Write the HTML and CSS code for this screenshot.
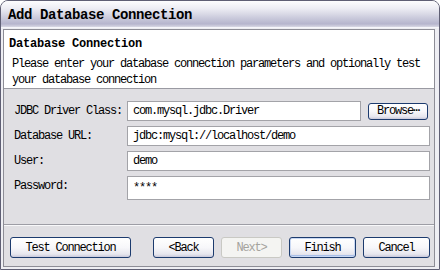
FILE: index.html
```html
<!DOCTYPE html>
<html lang="en">
<head>
  <meta charset="UTF-8" />
  <title>Add Database Connection</title>
  <link rel="stylesheet" href="styles.css">
</head>
<body>
  <div class="window">
    <div class="titlebar">Add Database Connection</div>
    <div class="frame">
      <div class="client">
        <div class="header">
          <div class="heading">Database Connection</div>
          <p class="desc">Please enter your database connection parameters and optionally test<br>your database connection</p>
        </div>

        <div class="form">
          <label class="label" for="driver">JDBC Driver Class:</label>
          <div class="field-with-button">
            <input class="field" id="driver" type="text" value="com.mysql.jdbc.Driver">
            <button class="btn btn-small">Browse⋯</button>
          </div>
          <label class="label" for="url">Database URL:</label>
          <input class="field" id="url" type="text" value="jdbc:mysql://localhost/demo">
          <label class="label" for="user">User:</label>
          <input class="field" id="user" type="text" value="demo">
          <label class="label" for="pass">Password:</label>
          <input class="field field-tall" id="pass" type="text" value="****">
        </div>

        <div class="buttons">
          <button class="btn btn-wide">Test Connection</button>
          <div class="spacer"></div>
          <button class="btn">&lt;Back</button>
          <button class="btn" disabled>Next&gt;</button>
          <button class="btn btn-default">Finish</button>
          <button class="btn btn-large">Cancel</button>
        </div>
      </div>
    </div>
  </div>
</body>
</html>
```

FILE: styles.css
```css
* { margin: 0; padding: 0; box-sizing: border-box; }
body {
  background: #fff;
  font-family: "Liberation Mono", "DejaVu Sans Mono", monospace;
  font-size: 12px;
  letter-spacing: -1.2px;
  color: #000;
}
.window {
  width: 440px;
  height: 270px;
  border: 1px solid #5f5f74;
  border-radius: 8px 8px 0 0;
  background: #eeeef3;
  display: flex;
  flex-direction: column;
  overflow: hidden;
}
.titlebar {
  height: 27px;
  flex: none;
  padding-left: 7px;
  line-height: 28px;
  font-size: 14px;
  font-weight: bold;
  letter-spacing: -0.4px;
  background: linear-gradient(#fdfdfe 0%, #ececf3 30%, #c6c6d9 70%, #b6b5cd 88%, #d8d8e4 100%);
  border-bottom: 1px solid #f6f6fa;
}
.frame {
  flex: 1;
  padding: 1px 4px 2px 2px;
  display: flex;
}
.client {
  flex: 1;
  border: 1px solid #8d8d96;
  background: #e0dfe3;
  display: flex;
  flex-direction: column;
}
.header {
  height: 59px;
  flex: none;
  background: #fff;
  border-bottom: 1px solid #9a9aa2;
  padding: 6px 0 0 5px;
  line-height: 16px;
}
.heading {
  font-weight: bold;
  letter-spacing: -0.2px;
}
.desc {
  margin-top: 4px;
  padding-left: 3px;
  line-height: 16px;
}
.form {
  flex: 1;
  padding: 12px 4px 0 10px;
  display: grid;
  grid-template-columns: 113px 1fr;
  grid-auto-rows: 20px;
  row-gap: 5px;
  align-content: start;
  align-items: center;
}
.label { line-height: 20px; }
.field {
  height: 20px;
  width: 100%;
  border: 1px solid #a3a3a8;
  background: #fff;
  padding: 0 5px;
  font: inherit;
  letter-spacing: inherit;
  color: #000;
  outline: none;
}
.field-tall { height: 24px; align-self: start; }
.field-with-button {
  display: flex;
  align-items: center;
  gap: 7px;
  padding-right: 2px;
}
.field-with-button .field { flex: 1; }
.buttons {
  flex: none;
  height: 42px;
  border-top: 1px solid #9d9da5;
  box-shadow: inset 0 1px #f8f8fa;
  padding: 12px 4px 0 6px;
  display: flex;
  align-items: flex-start;
  gap: 7px;
}
.spacer { flex: 1; }
.btn {
  width: 61px;
  height: 21px;
  border: 1px solid #1c3b6e;
  border-radius: 3px;
  background: linear-gradient(#ffffff 0%, #f7f7fa 50%, #e6e6ee 85%, #c8c8da 100%);
  font: inherit;
  letter-spacing: inherit;
  color: #000;
  cursor: pointer;
}
.btn-small { width: 60px; height: 17px; line-height: 14px; }
.btn-wide { width: 121px; }
.btn-large { width: 67px; }
.btn-default {
  width: 67px;
  box-shadow: inset 0 0 0 1px #c9d8f3, inset 0 -1px 0 1px #a9bfe8;
}
.btn:disabled {
  border-color: #c9c9c4;
  background: #f4f4f2;
  color: #a4a39d;
  cursor: default;
}
```
